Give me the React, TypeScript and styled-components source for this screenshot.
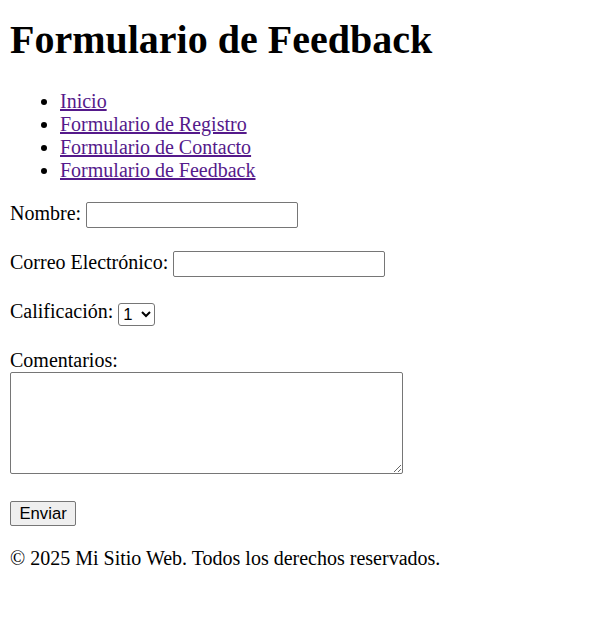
import React from "react";
import styled, { createGlobalStyle } from "styled-components";

const Global = createGlobalStyle`
  html, body { background: #fff; }
  body {
    margin: 10px;
    font-family: "Liberation Serif", "Times New Roman", serif;
    font-size: 20px;
    color: #000;
  }
`;

const Title = styled.h1`
  font-size: 40px;
  font-weight: bold;
  margin: 6px 0 26.8px;
  line-height: normal;
`;

const NavList = styled.ul`
  margin: 20px 0;
  padding-left: 50px;
  list-style: disc;
`;

const NavLink = styled.a`
  color: #551a8b;
  text-decoration: underline;
`;

const Form = styled.form`
  margin: 0;
`;

const Field = styled.div`
  min-height: 26px;
  margin-bottom: 23px;
  &:last-child { margin-bottom: 0; }
`;

const CommentField = styled(Field)`
  margin-bottom: 22px;
`;

const TextInput = styled.input`
  font-family: "Liberation Sans", Arial, sans-serif;
  font-size: 16.67px;
  width: 212px;
  height: 26px;
  box-sizing: border-box;
  border: 1px solid #767676;
  border-radius: 2px;
  padding: 1px 2px;
  background: #fff;
`;

const Select = styled.select`
  font-family: "Liberation Sans", Arial, sans-serif;
  font-size: 16.67px;
  height: 23px;
  width: 37px;
  box-sizing: border-box;
  border: 1px solid #767676;
  border-radius: 3px;
  background: #fff;
  color: #000;
  vertical-align: -2px;
`;

const Comments = styled.textarea`
  display: inline-block;
  width: 393px;
  height: 102px;
  box-sizing: border-box;
  border: 1px solid #767676;
  border-radius: 2px;
  font-family: "Liberation Mono", monospace;
  font-size: 16.67px;
`;

const Button = styled.button`
  font-family: "Liberation Sans", Arial, sans-serif;
  font-size: 16.67px;
  height: 25px;
  padding: 1px 8.5px;
  border: 1px solid #767676;
  border-radius: 2px;
  background: #efefef;
  color: #000;
`;

const Footer = styled.footer`
  p { margin: 20px 0; }
`;

export default function App() {
  return (
    <>
      <Global />
      <header>
        <Title>Formulario de Feedback</Title>
        <nav>
          <NavList>
            <li><NavLink href="#">Inicio</NavLink></li>
            <li><NavLink href="#">Formulario de Registro</NavLink></li>
            <li><NavLink href="#">Formulario de Contacto</NavLink></li>
            <li><NavLink href="#">Formulario de Feedback</NavLink></li>
          </NavList>
        </nav>
      </header>
      <Form onSubmit={(e) => e.preventDefault()}>
        <Field>
          <label htmlFor="nombre">Nombre:</label> <TextInput id="nombre" type="text" />
        </Field>
        <Field>
          <label htmlFor="correo">Correo Electrónico:</label> <TextInput id="correo" type="email" />
        </Field>
        <Field>
          <label htmlFor="calif">Calificación:</label>{" "}
          <Select id="calif" defaultValue="1">
            <option value="1">1</option>
            <option value="2">2</option>
            <option value="3">3</option>
            <option value="4">4</option>
            <option value="5">5</option>
          </Select>
        </Field>
        <CommentField>
          <label htmlFor="coment">Comentarios:</label>
          <br />
          <Comments id="coment" />
        </CommentField>
        <Field>
          <Button type="submit">Enviar</Button>
        </Field>
      </Form>
      <Footer>
        <p>© 2025 Mi Sitio Web. Todos los derechos reservados.</p>
      </Footer>
    </>
  );
}
